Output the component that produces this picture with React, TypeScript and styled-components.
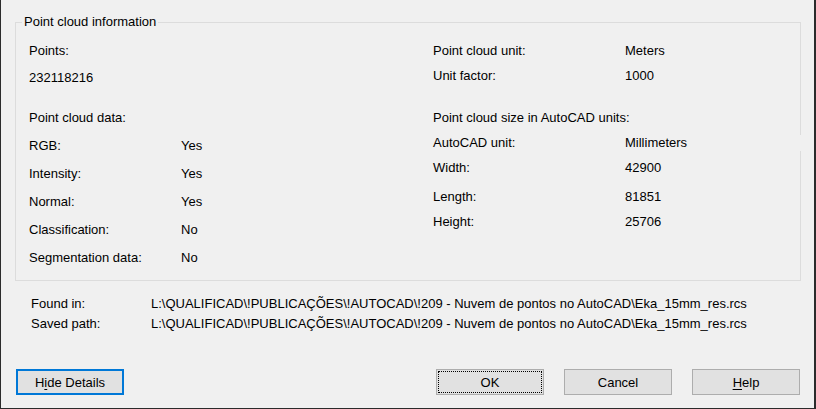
import styled, { createGlobalStyle } from "styled-components";

const Global = createGlobalStyle`
    html, body {
        margin: 0;
        padding: 0;
        background: #f0f0f0;
    }
    body {
        font-family: "Liberation Sans", Arial, sans-serif;
        font-size: 13px;
        color: #000;
    }`

const Window = styled.div`
    box-sizing: border-box;
    width: 816px;
    height: 409px;
    background: #f0f0f0;
    border-left: 1px solid #2b2b2b;
    border-right: 2px solid #2b2b2b;
    border-bottom: 1px solid #2b2b2b;
    padding: 14px 0 0 14px;
    display: flex;
    flex-direction: column;`

const Group = styled.fieldset`
    box-sizing: border-box;
    margin: 0;
    padding: 0;
    min-width: 0;
    width: 786px;
    height: 267px;
    border: 1px solid #dcdcdc;`

const Legend = styled.legend`
    margin-left: 6px;
    padding: 0 2px;
    line-height: 16px;`

const Columns = styled.div`
    display: grid;
    grid-template-columns: 404px minmax(0, 1fr);
    padding-left: 13px;`

const Column = styled.div`
    display: flex;
    flex-direction: column;
    min-width: 0;`

const Row = styled.div<{ $gap: number; $label: number }>`
    display: grid;
    grid-template-columns: ${p => p.$label}px minmax(0, 1fr);
    height: 16px;
    line-height: 16px;
    margin-top: ${p => p.$gap}px;
    white-space: nowrap;`

const Value = styled.span<{ $cover?: boolean }>`
    ${p => p.$cover && `
        background: #f0f0f0;
        width: 182px;
        position: relative;
    `}`

const Paths = styled.div`
    margin: 15px 0 0 16px;
    display: flex;
    flex-direction: column;
    gap: 4px;`

const PathRow = styled.div`
    display: grid;
    grid-template-columns: 120px 1fr;
    line-height: 16px;
    white-space: nowrap;`

const ButtonBar = styled.div`
    margin: 37px 0 0 1px;
    width: 784px;
    display: flex;
    justify-content: space-between;`

const ButtonGroup = styled.div`
    display: flex;
    gap: 20px;`

const Button = styled.button<{ $default?: boolean; $focus?: boolean }>`
    box-sizing: border-box;
    position: relative;
    width: 108px;
    height: 26px;
    padding: 0;
    margin: 0;
    font-family: "Liberation Sans", Arial, sans-serif;
    font-size: 13px;
    color: #000;
    background: #e1e1e1;
    border: ${p => p.$default ? "2px solid #0078d7" : "1px solid #adadad"};
    border-radius: 0;

    ${p => p.$focus && `
        &::after {
            content: "";
            position: absolute;
            inset: 1px;
            border: 1px dotted #000;
        }
    `}

    u {
        text-decoration: underline;
        text-underline-offset: 2px;
    }`

const leftRows = [
    { gap: 13, label: "Points:", value: "" },
    { gap: 11, label: "232118216", value: "" },
    { gap: 24, label: "Point cloud data:", value: "" },
    { gap: 12, label: "RGB:", value: "Yes" },
    { gap: 12, label: "Intensity:", value: "Yes" },
    { gap: 12, label: "Normal:", value: "Yes" },
    { gap: 12, label: "Classification:", value: "No" },
    { gap: 12, label: "Segmentation data:", value: "No" },
]

const rightRows = [
    { gap: 13, label: "Point cloud unit:", value: "Meters" },
    { gap: 9, label: "Unit factor:", value: "1000" },
    { gap: 26, label: "Point cloud size in AutoCAD units:", value: "" },
    { gap: 9, label: "AutoCAD unit:", value: "Millimeters", cover: true },
    { gap: 9, label: "Width:", value: "42900" },
    { gap: 13, label: "Length:", value: "81851" },
    { gap: 9, label: "Height:", value: "25706" },
]

const path = "L:\\QUALIFICAD\\!PUBLICAÇÕES\\!AUTOCAD\\!209 - Nuvem de pontos no AutoCAD\\Eka_15mm_res.rcs"

export default function App() {
    return (
        <>
            <Global />
            <Window>
                <Group>
                    <Legend>Point cloud information</Legend>
                    <Columns>
                        <Column>
                            {leftRows.map(r => (
                                <Row key={r.label} $gap={r.gap} $label={152}>
                                    <span>{r.label}</span>
                                    <Value>{r.value}</Value>
                                </Row>
                            ))}
                        </Column>
                        <Column>
                            {rightRows.map(r => (
                                <Row key={r.label} $gap={r.gap} $label={192}>
                                    <span>{r.label}</span>
                                    <Value $cover={r.cover}>{r.value}</Value>
                                </Row>
                            ))}
                        </Column>
                    </Columns>
                </Group>
                <Paths>
                    <PathRow>
                        <span>Found in:</span>
                        <span>{path}</span>
                    </PathRow>
                    <PathRow>
                        <span>Saved path:</span>
                        <span>{path}</span>
                    </PathRow>
                </Paths>
                <ButtonBar>
                    <Button $default>H<u>i</u>de Details</Button>
                    <ButtonGroup>
                        <Button $focus>OK</Button>
                        <Button>Cancel</Button>
                        <Button><u>H</u>elp</Button>
                    </ButtonGroup>
                </ButtonBar>
            </Window>
        </>
    )
}
